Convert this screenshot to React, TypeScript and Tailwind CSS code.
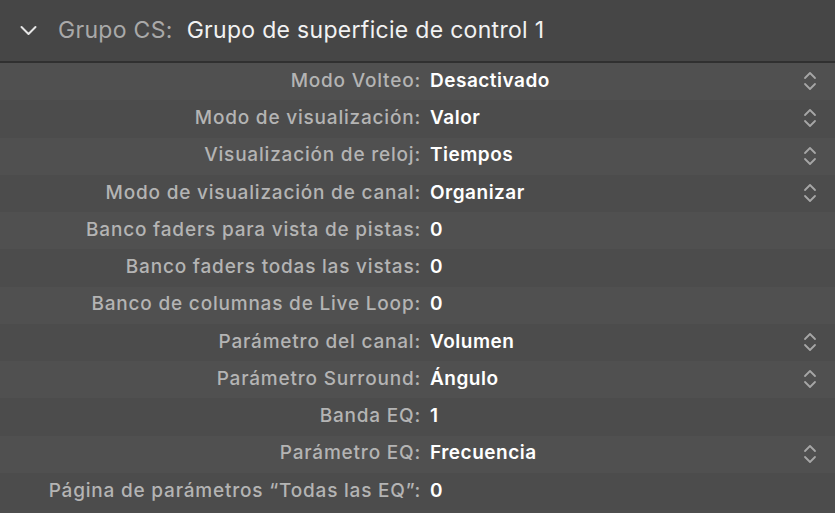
import React from 'react';

const ROWS: { label: string; value: string; select?: boolean }[] = [
  { label: 'Modo Volteo:', value: 'Desactivado', select: true },
  { label: 'Modo de visualización:', value: 'Valor', select: true },
  { label: 'Visualización de reloj:', value: 'Tiempos', select: true },
  { label: 'Modo de visualización de canal:', value: 'Organizar', select: true },
  { label: 'Banco faders para vista de pistas:', value: '0' },
  { label: 'Banco faders todas las vistas:', value: '0' },
  { label: 'Banco de columnas de Live Loop:', value: '0' },
  { label: 'Parámetro del canal:', value: 'Volumen', select: true },
  { label: 'Parámetro Surround:', value: 'Ángulo', select: true },
  { label: 'Banda EQ:', value: '1' },
  { label: 'Parámetro EQ:', value: 'Frecuencia', select: true },
  { label: 'Página de parámetros “Todas las EQ”:', value: '0' },
];

const UpDown = () => (
  <svg width="16" height="22" viewBox="0 0 16 22" fill="none" stroke="#a6a6a6" strokeWidth="1.8" strokeLinecap="round" strokeLinejoin="round">
    <path d="M3 8 L8 3 L13 8" />
    <path d="M3 14 L8 19 L13 14" />
  </svg>
);

export default function App() {
  return (
    <div className="w-[835px] h-[513px] overflow-hidden bg-[#4e4e4e] font-['Inter','Liberation_Sans',sans-serif]">
      <div className="h-[61px] bg-[#464646] flex items-center">
        <svg className="ml-[20px]" width="17" height="11" viewBox="0 0 17 11" fill="none" stroke="#e6e6e6" strokeWidth="2" strokeLinecap="round" strokeLinejoin="round">
          <path d="M1.5 2 L8.5 9 L15.5 2" />
        </svg>
        <span className="ml-[21px] text-[23px] text-[#a9a9a9] tracking-[0.3px]">Grupo CS:</span>
        <span className="ml-[14px] text-[23px] text-[#f2f2f2] tracking-[0.3px]">Grupo de superficie de control 1</span>
      </div>
      <div className="h-[2px] bg-[#303030]" />
      <div className="flex flex-col">
        {ROWS.map((r, i) => (
          <div key={i} className={`h-[37.25px] pb-[1px] flex items-center ${i % 2 === 0 ? 'bg-[#505050]' : 'bg-[#4c4c4c]'}`}>
            <div className="w-[421px] text-right text-[19px] font-medium text-[#b4b4b4] tracking-[0.8px]">{r.label}</div>
            <div className="ml-[9px] flex-1 text-[19px] font-semibold text-white tracking-[0.5px]">{r.value}</div>
            <div className="w-[16px] mr-[17px] flex items-center">{r.select && <UpDown />}</div>
          </div>
        ))}
      </div>
    </div>
  );
}
